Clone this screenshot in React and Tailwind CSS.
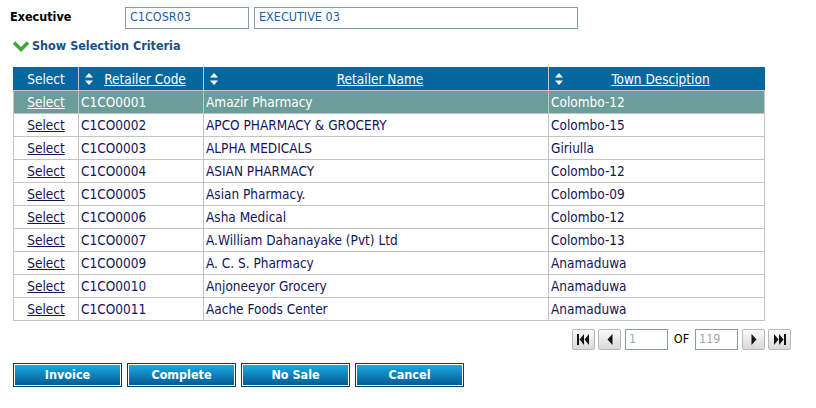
import React from "react";

const ROWS = [
  ["C1CO0001", "Amazir Pharmacy", "Colombo-12"],
  ["C1CO0002", "APCO PHARMACY & GROCERY", "Colombo-15"],
  ["C1CO0003", "ALPHA MEDICALS", "Giriulla"],
  ["C1CO0004", "ASIAN PHARMACY", "Colombo-12"],
  ["C1CO0005", "Asian Pharmacy.", "Colombo-09"],
  ["C1CO0006", "Asha Medical", "Colombo-12"],
  ["C1CO0007", "A.William Dahanayake (Pvt) Ltd", "Colombo-13"],
  ["C1CO0009", "A. C. S. Pharmacy", "Anamaduwa"],
  ["C1CO0010", "Anjoneeyor Grocery", "Anamaduwa"],
  ["C1CO0011", "Aache Foods Center", "Anamaduwa"],
];

const font = { fontFamily: '"DejaVu Sans Condensed", "DejaVu Sans", Tahoma, sans-serif' };

function SortIcon() {
  return (
    <svg width="8" height="12" viewBox="0 0 8 12" className="inline-block">
      <path d="M4 0 L8 4.5 L0 4.5 Z" fill="white" />
      <path d="M4 12 L8 7.5 L0 7.5 Z" fill="white" />
    </svg>
  );
}

function PagerBtn({ children, className = "" }) {
  return (
    <button className={`w-[23px] h-[21px] border border-[#b8b8b8] rounded-[2px] bg-gradient-to-b from-[#fafafa] to-[#d9d9d9] flex items-center justify-center ${className}`}>
      {children}
    </button>
  );
}

function ActionBtn({ label }) {
  return (
    <button className="w-[109px] h-[24px] border border-[#0c3a63] bg-gradient-to-b from-[#1eaee4] to-[#05578f] text-white font-bold text-[12.5px] shadow-[inset_0_0_0_1px_#ffffff]">
      {label}
    </button>
  );
}

export default function App() {
  return (
    <div className="w-[816px] h-[408px] bg-white text-[13.5px] relative" style={font}>
      <div className="flex items-center pt-[7px] pl-[10px] h-[28px]">
        <span className="w-[115px] font-bold text-[12.5px] text-black">Executive</span>
        <div className="w-[124px] h-[22px] border border-[#8a9aa8] px-[4px] flex items-center text-[#1b5ea3] text-[12.5px]">C1COSR03</div>
        <div className="w-[324px] h-[22px] ml-[5px] border border-[#8a9aa8] px-[4px] flex items-center text-[#1b5ea3] text-[12.5px]">EXECUTIVE 03</div>
      </div>
      <div className="flex items-center pl-[13px] mt-[10px] h-[16px]">
        <svg width="16" height="12" viewBox="0 0 16 12">
          <path d="M1 2.5 L8 9.5 L15 2.5" stroke="#3aa836" strokeWidth="3.5" fill="none" strokeLinejoin="miter" />
        </svg>
        <span className="ml-[3px] font-bold text-[12.5px] text-[#1a4f8a]">Show Selection Criteria</span>
      </div>

      <table className="ml-[13px] mt-[13px] w-[752px] border-collapse text-[13.5px]">
        <thead>
          <tr className="bg-[#06679f] text-white h-[23px]">
            <th className="w-[65px] font-normal border border-[#c4c4c4] border-t-[#06679f] border-l-[#06679f] text-center">Select</th>
            <th className="w-[125px] font-normal border border-[#c4c4c4] border-t-[#06679f] px-[6px]">
              <div className="flex items-center">
                <SortIcon />
                <span className="flex-1 text-center underline">Retailer Code</span>
              </div>
            </th>
            <th className="w-[345px] font-normal border border-[#c4c4c4] border-t-[#06679f] px-[6px]">
              <div className="flex items-center">
                <SortIcon />
                <span className="flex-1 text-center underline">Retailer Name</span>
              </div>
            </th>
            <th className="font-normal border border-[#c4c4c4] border-t-[#06679f] border-r-[#06679f] px-[6px]">
              <div className="flex items-center">
                <SortIcon />
                <span className="flex-1 text-center underline">Town Desciption</span>
              </div>
            </th>
          </tr>
        </thead>
        <tbody>
          {ROWS.map((r, i) => {
            const sel = i === 0;
            return (
              <tr key={r[0]} className={`h-[23px] ${sel ? "bg-[#6b9d9a] text-white" : "bg-white text-[#14145a]"}`}>
                <td className="border border-[#c4c4c4] text-center">
                  <span className={`underline ${sel ? "text-white" : "text-[#14145a]"}`}>Select</span>
                </td>
                <td className="border border-[#c4c4c4] px-[2px]">{r[0]}</td>
                <td className="border border-[#c4c4c4] px-[2px]">{r[1]}</td>
                <td className="border border-[#c4c4c4] px-[2px]">{r[2]}</td>
              </tr>
            );
          })}
        </tbody>
      </table>

      <div className="flex items-center justify-end pr-[25px] mt-[8px] h-[21px] text-[12.5px]">
        <PagerBtn>
          <svg width="13" height="11" viewBox="0 0 13 11">
            <rect x="0" y="0" width="2" height="11" fill="#111" />
            <path d="M7 0 L2.5 5.5 L7 11 Z" fill="#111" />
            <path d="M12 0 L7.5 5.5 L12 11 Z" fill="#111" />
          </svg>
        </PagerBtn>
        <PagerBtn className="ml-[3px]">
          <svg width="6" height="11" viewBox="0 0 6 11">
            <path d="M5.5 0 L0.5 5.5 L5.5 11 Z" fill="#111" />
          </svg>
        </PagerBtn>
        <div className="w-[43px] h-[21px] ml-[4px] border border-[#8a9aa8] px-[3px] flex items-center text-[#a8a8a8]">1</div>
        <span className="w-[27px] text-center text-black">OF</span>
        <div className="w-[43px] h-[21px] border border-[#8a9aa8] px-[3px] flex items-center text-[#a8a8a8]">119</div>
        <PagerBtn className="ml-[4px]">
          <svg width="6" height="11" viewBox="0 0 6 11">
            <path d="M0.5 0 L5.5 5.5 L0.5 11 Z" fill="#111" />
          </svg>
        </PagerBtn>
        <PagerBtn className="ml-[3px]">
          <svg width="13" height="11" viewBox="0 0 13 11">
            <path d="M1 0 L5.5 5.5 L1 11 Z" fill="#111" />
            <path d="M6 0 L10.5 5.5 L6 11 Z" fill="#111" />
            <rect x="11" y="0" width="2" height="11" fill="#111" />
          </svg>
        </PagerBtn>
      </div>

      <div className="flex gap-[5px] pl-[13px] mt-[13px]">
        <ActionBtn label="Invoice" />
        <ActionBtn label="Complete" />
        <ActionBtn label="No Sale" />
        <ActionBtn label="Cancel" />
      </div>
    </div>
  );
}
